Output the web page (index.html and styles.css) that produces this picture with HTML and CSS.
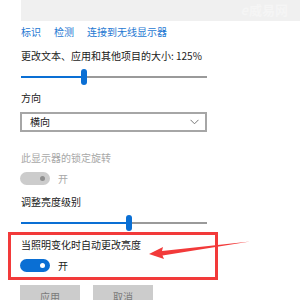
FILE: index.html
```html
<!DOCTYPE html>
<html lang="zh">
<head>
<meta charset="utf-8">
<link rel="stylesheet" href="styles.css">
</head>
<body>
<div class="page">
  <div class="band"><span class="wm"><span class="wm-e">e</span>威易网</span></div>
  <div class="links"><span>标识</span><span>检测</span><span>连接到无线显示器</span></div>
  <div class="label l-scale">更改文本、应用和其他项目的大小: 125%</div>
  <div class="slider"><div class="fill" style="width:60px"></div><div class="thumb"></div><div class="rest"></div></div>
  <div class="label l-dir">方向</div>
  <div class="select"><span>横向</span><svg class="chev" width="9" height="6" viewBox="0 0 9 6"><path d="M0.5 0.8 L4.5 4.8 L8.5 0.8" fill="none" stroke="#777" stroke-width="1"/></svg></div>
  <div class="label muted l-lock">此显示器的锁定旋转</div>
  <div class="toggle-row t-lock"><div class="toggle off"><div class="knob"></div></div><span class="muted">开</span></div>
  <div class="label l-bright">调整亮度级别</div>
  <div class="slider s2"><div class="fill" style="width:105px"></div><div class="thumb"></div><div class="rest"></div></div>
  <div class="label l-auto">当照明变化时自动更改亮度</div>
  <div class="toggle-row t-auto"><div class="toggle on"><div class="knob"></div></div><span>开</span></div>
  <div class="buttons"><div class="btn">应用</div><div class="btn">取消</div></div>
  <svg class="annot" width="300" height="300" viewBox="0 0 300 300">
    <rect x="9.5" y="233.5" width="207" height="45" fill="none" stroke="#f23a3a" stroke-width="3"/>
    <path d="M250 241.5 L162 251 L163 247 L149 254 L164 259 L162.5 255.5 Z" fill="#f23a3a"/>
  </svg>
</div>
</body>
</html>
```
FILE: styles.css
```css
html, body { margin: 0; padding: 0; background: #fff; }
body {
  font-family: "Noto Sans CJK SC", "Noto Sans", sans-serif;
  font-size: 10px;
  color: #1a1a1a;
  width: 300px;
  height: 300px;
  overflow: hidden;
}
.page { position: relative; width: 300px; height: 300px; }
.band {
  margin-left: 21px;
  height: 21px;
  background: #f0f0f0;
  position: relative;
}
.wm {
  position: absolute;
  right: 12px;
  top: 2px;
  font-size: 13px;
  line-height: 16px;
  color: #f5f5f5;
  font-weight: bold;
}
.wm-e { font-style: italic; margin-right: 1px; }
.links {
  display: flex;
  gap: 13px;
  height: 22px;
  align-items: center;
  padding-left: 21px;
  color: #1e78d2;
  line-height: 14px;
}
.label {
  padding-left: 21px;
  height: 20px;
  line-height: 20px;
  display: flex;
  align-items: center;
}
.l-scale { height: 26px; }
.l-dir { margin-top: 3px; }
.l-lock { margin-top: 16px; }
.l-bright { margin-top: 7px; }
.l-auto { margin-top: 4px; }
.muted { color: #a8a8a8; }
.slider {
  margin-left: 21px;
  width: 186px;
  height: 16px;
  display: flex;
  align-items: center;
}
.slider .fill { height: 2px; background: #0a6fd4; }
.slider .thumb { width: 6px; height: 16px; border-radius: 3px; background: #0a6fd4; }
.slider .rest { flex: 1; height: 2px; background: #9a9a9a; }
.s2 { margin-top: 3px; }
.select {
  margin-top: 4px;
  margin-left: 20px;
  width: 187px;
  height: 20px;
  box-sizing: border-box;
  border: 2px solid #a6a6a6;
  display: flex;
  align-items: center;
  justify-content: space-between;
  padding: 0 6px 0 8px;
  line-height: 14px;
}
.toggle-row {
  margin-left: 20px;
  height: 14px;
  display: flex;
  align-items: center;
  gap: 8px;
}
.t-lock { margin-top: 3px; }
.t-auto { margin-top: 3px; }
.toggle {
  width: 30px;
  height: 13px;
  border-radius: 7px;
  display: flex;
  align-items: center;
  justify-content: flex-end;
  padding-right: 5px;
  box-sizing: border-box;
}
.toggle .knob { width: 5px; height: 5px; border-radius: 50%; }
.toggle.off { background: #cccccc; }
.toggle.off .knob { background: #8f8f8f; }
.toggle.on { background: #0a6fd4; }
.toggle.on .knob { background: #fff; }
.buttons {
  margin-top: 13px;
  margin-left: 20px;
  display: flex;
  gap: 13px;
}
.btn {
  width: 60px;
  height: 22px;
  background: #cccccc;
  color: #7a7a7a;
  display: flex;
  align-items: center;
  justify-content: center;
}
.annot { position: absolute; left: 0; top: 0; pointer-events: none; }
```
